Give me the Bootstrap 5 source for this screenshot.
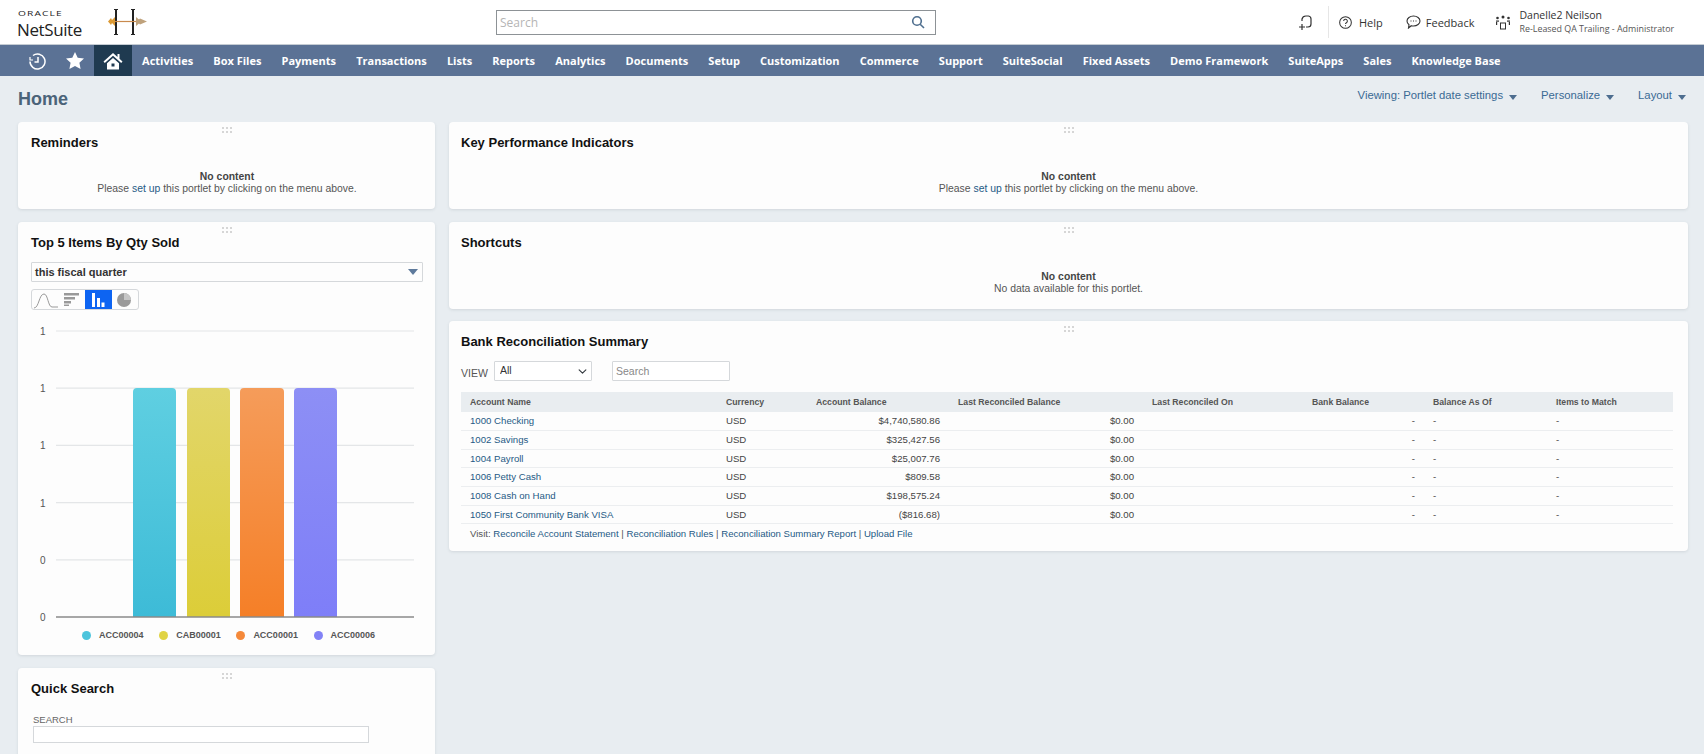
<!DOCTYPE html>
<html lang="en">
<head>
    <meta charset="UTF-8">
    <meta name="viewport" content="width=device-width, initial-scale=1.0">
    <title>NetSuite Home</title>
    <link href="https://cdn.jsdelivr.net/npm/bootstrap@5.3.0/dist/css/bootstrap.min.css" rel="stylesheet">
    <style>
        html, body { height: 754px; overflow: hidden; }
        body { background: #e8edf1; font-family: "Liberation Sans", Arial, sans-serif; color: #333; }
        a { color: #255a85; text-decoration: none; }

        /* top header */
        .ns-head { height: 44px; background: #fff; padding-left: 18px; }
        .ns-logo { width: 90px; line-height: 1; color: #222; }
        .ns-oracle { font-size: 7px; letter-spacing: .8px; height: 8px; margin-top: 3px; font-family: "Open Sans", sans-serif; transform: scaleX(1.45); transform-origin: left center; }
        .ns-suite { font-size: 17px; letter-spacing: -.4px; font-family: "Open Sans", sans-serif; font-weight: 400; margin-top: 3px; margin-left: -1px; }
        .ns-brand { margin-right: 348px; }
        .ns-search { width: 440px; height: 25px; border: 1px solid #8d9296; padding: 0 10px 0 3px; }
        .ns-search span { font: 12px "Open Sans", sans-serif; color: #b5b5b5; }
        .ns-right { padding-left: 362px; width: 768px; flex: none; }
        .ns-ico { color: #333; flex: none; }
        .ns-sep { width: 1px; height: 32px; background: #e6e6e6; margin: 0 10px 0 16px; }
        .ns-tool { font: 400 11px "Open Sans", sans-serif; color: #333; }
        .ns-gap-help { margin-right: 7px; }
        .ns-gap-feed { margin: 0 5px 0 23px; }
        .ns-gap-user { margin: 0 8px 0 21px; }
        .ns-user-name { font: 400 10.5px "Open Sans", sans-serif; color: #333; line-height: 14px; }
        .ns-user-role { font: 400 8.9px "Open Sans", sans-serif; color: #555; line-height: 14px; white-space: nowrap; }

        /* main nav */
        .ns-nav { height: 32px; background: #5b7295; border-top: 1px solid #c5ccd3; padding: 0 0 0 18px; flex-wrap: nowrap; }
        .ns-nav .nav-link { color: #fff; font: 700 11px "Open Sans", sans-serif; padding: 0 10.05px; line-height: 31px; white-space: nowrap; }
        .ns-nav .ns-iconlink { width: 38px; height: 31px; padding: 0; display: flex; align-items: center; justify-content: center; }
        .ns-nav .ns-active { background: #1f3a50; }

        /* title row */
        .ns-title { height: 46px; padding: 0 18px 0 18px; }
        .ns-title h1 { font-size: 18px; font-weight: 700; color: #4b6379; margin: 2px 0 0; }
        .ns-menu { font-size: 11.3px; color: #3a6a94; margin-left: 24px; margin-bottom: 8px; display: block; }
        .ns-caret { display: inline-block; border: 4.5px solid transparent; border-top: 5px solid #4d6d8f; border-bottom: 0; margin-left: 6px; vertical-align: -1px; }

        /* portlets */
        .ns-main { padding: 0 16px 0 18px; gap: 14px; align-items: flex-start; height: 632px; overflow: hidden; }
        .ns-left { width: 417px; flex: none; }
        .ns-port { background: #fdfdfd; border: 0; border-radius: 4px; box-shadow: 0 1px 3px rgba(90,100,110,.16); margin-bottom: 13px; position: relative; padding: 13px 12px 0 13px; }
        .ns-rightcol .ns-port { padding-left: 12px; }
        .ns-port h2 { font-size: 13px; font-weight: 700; color: #111; margin: 0; line-height: 15px; }
        .ns-grip { position: absolute; top: 4px; left: 50%; width: 11px; height: 8px; margin-left: -6px; background: radial-gradient(circle, #d6d6d6 .8px, transparent 1px) 0 0 / 4px 4px; }
        .ns-empty { height: 59px; text-align: center; font-size: 10.4px; line-height: 12px; padding-top: 21px; color: #555; }
        .ns-empty b { color: #444; display: block; }
        .ns-short { margin-bottom: 12px; }

        /* chart portlet */
        .ns-chart { height: 433px; }
        .ns-pick { height: 20px; margin-top: 12px; width: 392px; border: 1px solid #d5d8db; border-radius: 1px; font-size: 11px; font-weight: 700; color: #333; padding: 0 3px; }
        .ns-pick i { border: 5px solid transparent; border-top: 6px solid #5e7a9c; border-bottom: 0; display: block; margin-right: 1px; }
        .ns-types { margin-top: 7px; height: 21px; width: 108px; border: 1px solid #d5d8db; border-radius: 3px; }
        .ns-types .btn { width: 26.5px; padding: 0; border: 0; border-radius: 0; display: flex; align-items: center; justify-content: center; background: transparent; }
        .ns-types .btn.ns-on { background: #0d64f2; }
        .ns-plot { display: block; margin: 15px 0 0 -13px; }
        .ns-plot text { font: 10px "Liberation Sans", sans-serif; fill: #555; }
        .ns-legend { padding-left: 51px; margin-top: 4px; font-size: 9px; font-weight: 700; color: #555; }
        .ns-legend span { width: 77.2px; display: flex; align-items: center; }
        .ns-legend i { width: 9px; height: 9px; border-radius: 50%; margin-right: 8px; display: block; flex: none; }

        .ns-quick { height: 100px; margin-bottom: 0; }
        .ns-quick label { display: block; font-size: 9.5px; color: #666; margin: 18px 0 0 2px; line-height: 12px; }
        .ns-quick input { width: 336px; height: 17px; min-height: 0; margin-left: 2px; border: 1px solid #d5d8db; border-radius: 0; padding: 0; display: block; background: #fff; }

        /* bank table */
        .ns-bank { height: 230px; }
        .ns-filter { margin-top: 12px; height: 20px; }
        .ns-filter span { font-size: 10.5px; color: #555; margin-top: 5px; width: 33px; }
        .ns-filter select { width: 98px; height: 20px; min-height: 0; padding: 0 4px 0 5px; font-size: 10.5px; border: 1px solid #d5d8db; border-radius: 1px; background-size: 11px 9px; background-position: right 3px center; color: #333; }
        .ns-filter input { width: 118px; height: 20px; min-height: 0; margin-left: 20px; padding: 0 3px; font-size: 10.5px; border: 1px solid #d5d8db; border-radius: 1px; }
        .ns-filter input::placeholder { color: #888; }
        .ns-table { margin: 11px 0 0 0; width: 1212px; table-layout: fixed; font-size: 9.65px; }
        .ns-table th, .ns-table td { padding: 0 9px; height: 18.67px; line-height: 16px; vertical-align: middle; background: transparent; color: #444; border-bottom: 1px solid #eceef0; white-space: nowrap; box-shadow: none; }
        .ns-table th { background: #e9edf0; font-size: 8.7px; font-weight: 700; color: #555; border: 0; height: 20px; }
        .ns-visit { font-size: 9.6px; color: #555; margin-left: 9px; margin-top: 3px; line-height: 14px; }
    </style>
</head>
<body>
    <!-- header -->
    <header class="ns-head d-flex align-items-center">
        <div class="d-flex align-items-center ns-brand">
            <div class="ns-logo">
                <div class="ns-oracle">ORACLE</div>
                <div class="ns-suite">NetSuite</div>
            </div>
            <svg width="40" height="26" viewBox="0 0 40 26">
                <rect x="7" y="1" width="2" height="24" fill="#222"/><rect x="24" y="1" width="2" height="24" fill="#222"/>
                <path d="M6 0.500h4M6 25.500h4M23 0.500h4M23 25.500h4" stroke="#222"/>
                <path d="M4 12.500h26" stroke="#c98a4e" stroke-width="1.200"/>
                <path d="M0 12.500l3-3.500 1 2 3-3v9l-3-3-1 2z" fill="#dc9a35"/>
                <path d="M28 8l3 2.500 1-1 7 3-7 3-1-1-3 2.500z" fill="#bfa27c"/>
            </svg>
        </div>
        <div class="ns-search d-flex align-items-center justify-content-between">
            <span>Search</span>
            <svg width="14" height="14" viewBox="0 0 14 14" fill="none" stroke="#4f6f8f" stroke-width="1.600"><circle cx="6" cy="6" r="4.300"/><path d="M9.200 9.200l3.800 3.800"/></svg>
        </div>
        <div class="d-flex align-items-center ns-right">
            <svg class="ns-ico" width="14" height="17" viewBox="0 0 14 17" fill="none" stroke="#333" stroke-width="1.200"><path d="M4 7V5a4 4 0 0 1 4-3h2.500a3 3 0 0 1 2.500 3v5a3 3 0 0 1-3 3H8"/><path d="M4 10v6M1 13h6"/></svg>
            <div class="ns-sep"></div>
            <svg class="ns-ico ns-gap-help" width="13" height="13" viewBox="0 0 14 14" fill="none" stroke="#333" stroke-width="1.100"><circle cx="7" cy="7" r="6.300"/><path d="M5 5.500a2 2 0 1 1 3 1.700c-.7.400-1 .8-1 1.500"/><path d="M7 10v1"/></svg>
            <span class="ns-tool">Help</span>
            <svg class="ns-ico ns-gap-feed" width="15" height="14" viewBox="0 0 15 14" fill="none" stroke="#333" stroke-width="1.100"><path d="M7.500 1c3.600 0 6.500 2.300 6.500 5s-2.900 5-6.500 5c-.8 0-1.500-.1-2.200-.3L2.500 13l.5-3.200C1.800 8.900 1 7.500 1 6c0-2.700 2.900-5 6.500-5z"/><path d="M4.500 6h1M7 6h1M9.500 6h1"/></svg>
            <span class="ns-tool">Feedback</span>
            <svg class="ns-ico ns-gap-user" width="16" height="16" viewBox="0 0 16 16" fill="#333"><circle cx="8" cy="3" r="1.500"/><circle cx="2.500" cy="4" r="1.300"/><circle cx="13.500" cy="4" r="1.300"/><path d="M5 8.500h6v7H5z M6 9.500v5h4v-5z" fill-rule="evenodd"/><rect x="1" y="6.500" width="3" height="1.200"/><rect x="12" y="6.500" width="3" height="1.200"/><rect x="1" y="8" width="1.200" height="3"/><rect x="13.800" y="8" width="1.200" height="3"/></svg>
            <div>
                <div class="ns-user-name">Danelle2 Neilson</div>
                <div class="ns-user-role">Re-Leased QA Trailing - Administrator</div>
            </div>
        </div>
    </header>

    <!-- main menu -->
    <nav class="nav ns-nav">
        <a class="nav-link ns-iconlink" href="#"><svg width="19" height="18" viewBox="0 0 19 18" fill="none" stroke="#fff" stroke-width="1.500"><path d="M5 3.500A7.500 7.500 0 1 1 2 9.500"/><path d="M2 5v3h3" stroke-width="1.200"/><path d="M10 5v5H6.500"/></svg></a>
        <a class="nav-link ns-iconlink" href="#"><svg width="18" height="17" viewBox="0 0 18 17" fill="#fff"><path d="M9 0l2.700 5.700 6.300.8-4.600 4.300 1.200 6.200L9 14l-5.600 3 1.200-6.200L0 6.500l6.300-.8z"/></svg></a>
        <a class="nav-link ns-iconlink ns-active" href="#"><svg width="20" height="18" viewBox="0 0 20 18" fill="#fff"><path d="M10 1L0.500 9.500l1.300 1.400L10 3.700l8.200 7.200 1.300-1.400-3-2.700V2h-2v2.900z"/><path d="M4 11.200L10 6l6 5.200V17.500H4z M8.500 11.500v3h3v-3z" fill-rule="evenodd"/></svg></a>
        <a class="nav-link" href="#">Activities</a>
        <a class="nav-link" href="#">Box Files</a>
        <a class="nav-link" href="#">Payments</a>
        <a class="nav-link" href="#">Transactions</a>
        <a class="nav-link" href="#">Lists</a>
        <a class="nav-link" href="#">Reports</a>
        <a class="nav-link" href="#">Analytics</a>
        <a class="nav-link" href="#">Documents</a>
        <a class="nav-link" href="#">Setup</a>
        <a class="nav-link" href="#">Customization</a>
        <a class="nav-link" href="#">Commerce</a>
        <a class="nav-link" href="#">Support</a>
        <a class="nav-link" href="#">SuiteSocial</a>
        <a class="nav-link" href="#">Fixed Assets</a>
        <a class="nav-link" href="#">Demo Framework</a>
        <a class="nav-link" href="#">SuiteApps</a>
        <a class="nav-link" href="#">Sales</a>
        <a class="nav-link" href="#">Knowledge Base</a>
    </nav>

    <!-- title row -->
    <div class="ns-title d-flex align-items-center justify-content-between">
        <h1>Home</h1>
        <div class="d-flex">
            <a class="ns-menu" href="#">Viewing: Portlet date settings<span class="ns-caret"></span></a>
            <a class="ns-menu" href="#">Personalize<span class="ns-caret"></span></a>
            <a class="ns-menu" href="#">Layout<span class="ns-caret"></span></a>
        </div>
    </div>

    <div class="ns-main d-flex">
        <!-- left column -->
        <div class="ns-left">
            <div class="card ns-port">
                <div class="ns-grip"></div>
                <h2>Reminders</h2>
                <div class="ns-empty"><b>No content</b>Please <a href="#">set up</a> this portlet by clicking on the menu above.</div>
            </div>

            <div class="card ns-port ns-chart">
                <div class="ns-grip"></div>
                <h2>Top 5 Items By Qty Sold</h2>
                <div class="ns-pick d-flex align-items-center justify-content-between"><span>this fiscal quarter</span><i></i></div>
                <div class="btn-group ns-types">
                    <button class="btn" type="button"><svg width="26" height="19" viewBox="0 0 26 19" fill="none" stroke="#999"><path d="M1 18c5 0 5-14 10-14 4 0 4 13 8 13h6"/></svg></button>
                    <button class="btn" type="button"><svg width="15" height="13" viewBox="0 0 15 13" fill="#999"><rect width="15" height="2.500"/><rect y="4" width="11" height="2.500"/><rect y="8" width="7" height="2.500"/><rect y="11.500" width="5" height="1.500"/></svg></button>
                    <button class="btn ns-on" type="button"><svg width="14" height="14" viewBox="0 0 14 14" fill="#fff"><rect x="1" width="3" height="14"/><rect x="6" y="5" width="3" height="9"/><rect x="10.500" y="9.500" width="3" height="4.500"/></svg></button>
                    <button class="btn" type="button"><svg width="14" height="14" viewBox="0 0 14 14"><circle cx="7" cy="7" r="7" fill="#9a9a9a"/><path d="M7 7V0a7 7 0 0 1 7 7z" fill="#c6c6c6"/></svg></button>
                </div>
                <svg class="ns-plot" width="417" height="300" viewBox="0 0 417 300">
                    <defs>
                        <linearGradient id="gCyan" x1="0" y1="0" x2="0" y2="1"><stop offset="0" stop-color="#5fcfe1"/><stop offset="1" stop-color="#3dbbd7"/></linearGradient>
                        <linearGradient id="gYellow" x1="0" y1="0" x2="0" y2="1"><stop offset="0" stop-color="#e2d66a"/><stop offset="1" stop-color="#dccd38"/></linearGradient>
                        <linearGradient id="gOrange" x1="0" y1="0" x2="0" y2="1"><stop offset="0" stop-color="#f59c5a"/><stop offset="1" stop-color="#f57f27"/></linearGradient>
                        <linearGradient id="gPurple" x1="0" y1="0" x2="0" y2="1"><stop offset="0" stop-color="#8d8ff5"/><stop offset="1" stop-color="#7e7ef8"/></linearGradient>
                    </defs>
                    <g stroke="#e4e6e8" stroke-width="1.200">
                        <path d="M38 6h358M38 63.200h358M38 120.400h358M38 177.600h358M38 234.800h358"/>
                    </g>
                    <text x="22" y="10">1</text>
                    <text x="22" y="67">1</text>
                    <text x="22" y="124">1</text>
                    <text x="22" y="182">1</text>
                    <text x="22" y="239">0</text>
                    <text x="22" y="296">0</text>
                    <path d="M115 292V67a4 4 0 0 1 4-4h35a4 4 0 0 1 4 4v225z" fill="url(#gCyan)"/>
                    <path d="M169 292V67a4 4 0 0 1 4-4h35a4 4 0 0 1 4 4v225z" fill="url(#gYellow)"/>
                    <path d="M222 292V67a4 4 0 0 1 4-4h36a4 4 0 0 1 4 4v225z" fill="url(#gOrange)"/>
                    <path d="M276 292V67a4 4 0 0 1 4-4h35a4 4 0 0 1 4 4v225z" fill="url(#gPurple)"/>
                    <path d="M38 292h358" stroke="#8a8a8a" stroke-width="1.500"/>
                </svg>
                <div class="ns-legend d-flex">
                    <span><i style="background:#4cc4dc"></i>ACC00004</span>
                    <span><i style="background:#e0d344"></i>CAB00001</span>
                    <span><i style="background:#f5893a"></i>ACC00001</span>
                    <span><i style="background:#8282f6"></i>ACC00006</span>
                </div>
            </div>

            <div class="card ns-port ns-quick">
                <div class="ns-grip"></div>
                <h2>Quick Search</h2>
                <label for="qs">SEARCH</label>
                <input id="qs" class="form-control" type="text">
            </div>
        </div>

        <!-- right column -->
        <div class="flex-grow-1 ns-rightcol">
            <div class="card ns-port">
                <div class="ns-grip"></div>
                <h2>Key Performance Indicators</h2>
                <div class="ns-empty"><b>No content</b>Please <a href="#">set up</a> this portlet by clicking on the menu above.</div>
            </div>

            <div class="card ns-port ns-short">
                <div class="ns-grip"></div>
                <h2>Shortcuts</h2>
                <div class="ns-empty"><b>No content</b>No data available for this portlet.</div>
            </div>

            <div class="card ns-port ns-bank">
                <div class="ns-grip"></div>
                <h2>Bank Reconciliation Summary</h2>
                <div class="ns-filter d-flex">
                    <span>VIEW</span>
                    <select class="form-select"><option>All</option></select>
                    <input class="form-control" type="text" placeholder="Search">
                </div>
                <table class="table ns-table mb-0">
                    <colgroup>
                        <col style="width:256px"><col style="width:90px"><col style="width:142px"><col style="width:194px"><col style="width:160px"><col style="width:121px"><col style="width:123px"><col style="width:126px">
                    </colgroup>
                    <thead>
                        <tr><th>Account Name</th><th>Currency</th><th>Account Balance</th><th>Last Reconciled Balance</th><th>Last Reconciled On</th><th>Bank Balance</th><th>Balance As Of</th><th>Items to Match</th></tr>
                    </thead>
                    <tbody id="bank-rows"></tbody>
                </table>
                <div class="ns-visit">Visit: <a href="#">Reconcile Account Statement</a> | <a href="#">Reconciliation Rules</a> | <a href="#">Reconciliation Summary Report</a> | <a href="#">Upload File</a></div>
            </div>
        </div>
    </div>

    <script src="https://cdn.jsdelivr.net/npm/bootstrap@5.3.0/dist/js/bootstrap.bundle.min.js"></script>
    <script>
        // bank rows
        const accounts = [
            ['1000 Checking', '$4,740,580.86'],
            ['1002 Savings', '$325,427.56'],
            ['1004 Payroll', '$25,007.76'],
            ['1006 Petty Cash', '$809.58'],
            ['1008 Cash on Hand', '$198,575.24'],
            ['1050 First Community Bank VISA', '($816.68)']
        ];
        document.getElementById('bank-rows').innerHTML = accounts.map(a => `
            <tr>
                <td><a href="#">${a[0]}</a></td>
                <td>USD</td>
                <td class="text-end">${a[1]}</td>
                <td class="text-end">$0.00</td>
                <td></td>
                <td class="text-end">-</td>
                <td>-</td>
                <td>-</td>
            </tr>`).join('');
    </script>
</body>
</html>
